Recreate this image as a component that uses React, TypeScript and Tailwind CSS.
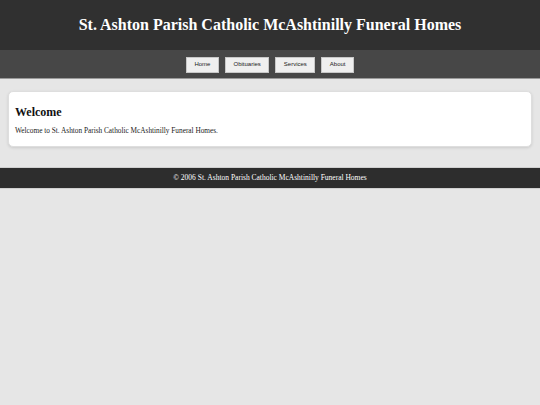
const links = ["Home", "Obituaries", "Services", "About"];

export default function App() {
  const serif = "font-['Georgia','Liberation_Serif',serif]";

  return (
    <div className={`min-h-[405px] bg-[#e6e6e6] ${serif}`}>
      <header className="flex h-[50px] items-center justify-center bg-[#303030]">
        <h1 className="text-[16px] font-bold leading-none text-white">
          St. Ashton Parish Catholic McAshtinilly Funeral Homes
        </h1>
      </header>

      <nav className="flex h-[29px] items-center justify-center gap-[6px] border-b border-[#9a9a9a] bg-[#474747] pt-[1px]">
        {links.map((link) => (
          <a
            key={link}
            href="#"
            className="flex h-[16px] items-center border border-[#c8c8c8] bg-[#efefef] px-[7.5px] font-['Liberation_Sans',Arial,sans-serif] text-[6px] text-[#222]"
          >
            {link}
          </a>
        ))}
      </nav>

      <main className="px-[8px] pb-[20px] pt-[12px]">
        <section className="rounded-[5px] border border-[#dedede] bg-white px-[6px] pb-[11px] pt-[13px] shadow-[0_1px_3px_rgba(0,0,0,0.12)]">
          <h2 className="text-[12px] font-bold leading-[14px] text-[#111]">Welcome</h2>
          <p className="mt-[7px] text-[7.3px] leading-[9px] text-[#222]">
            Welcome to St. Ashton Parish Catholic McAshtinilly Funeral Homes.
          </p>
        </section>
      </main>

      <footer className="flex h-[22px] items-center justify-center border-y border-[#cfcfcf] bg-[#2d2d2d] text-[7.5px] text-white">
        © 2006 St. Ashton Parish Catholic McAshtinilly Funeral Homes
      </footer>
    </div>
  );
}
